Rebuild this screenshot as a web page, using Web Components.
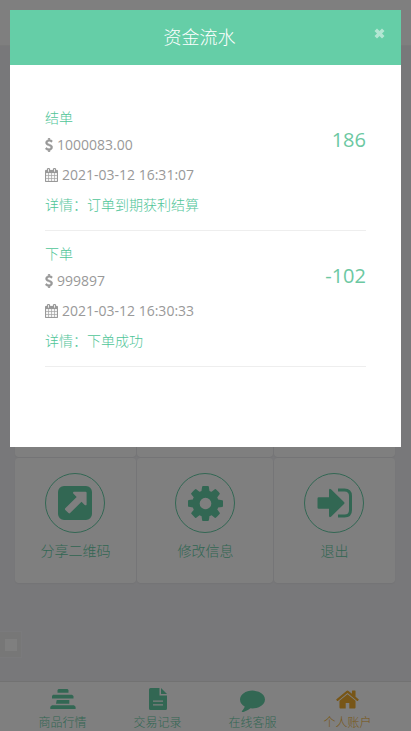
<!DOCTYPE html>
<html lang="zh-CN"><head><meta charset="utf-8"><title>资金流水</title>
<style>
html,body{margin:0;height:100%;overflow:hidden}
body{font:14px/20px "Open Sans","Noto Sans CJK SC",sans-serif;background:#f1f1f5;color:#999}
</style></head><body>
<account-page></account-page>
<script>
const icons={
home:['0 0 1792 1792','<path d="M1472 992v480q0 26-19 45t-45 19h-384v-384h-256v384h-384q-26 0-45-19t-19-45v-480q0-1 .5-3t.5-3l575-474 575 474q1 2 1 6zm223-69l-62 74q-8 9-21 11h-3q-13 0-21-7l-692-577-692 577q-12 8-24 7-13-2-21-11l-62-74q-8-10-7-23.5t11-21.5l719-599q32-26 76-26t76 26l244 204v-195q0-14 9-23t23-9h192q14 0 23 9t9 23v408l219 182q10 8 11 21.5t-7 23.5z"/>'],
cog:['128 128 1536 1536','<path d="M1152 896q0-106-75-181t-181-75-181 75-75 181 75 181 181 75 181-75 75-181zm512-109v222q0 12-8 23t-20 13l-185 28q-19 54-39 91 35 50 107 138 10 12 10 25t-9 23q-27 37-99 108t-94 71q-12 0-26-9l-138-108q-44 23-91 38-16 136-29 186-7 28-36 28h-222q-14 0-24.5-8.5t-11.5-21.5l-28-184q-49-16-90-37l-141 107q-10 9-25 9-14 0-25-11-126-114-165-168-7-10-7-23 0-12 8-23 15-21 51-66.5t54-70.5q-27-50-41-99l-183-27q-13-2-21-12.5t-8-23.5v-222q0-12 8-23t19-13l186-28q14-46 39-92-40-57-107-138-10-12-10-24 0-10 9-23 26-36 98.5-107.5t94.5-71.5q13 0 26 10l138 107q44-23 91-38 16-136 29-186 7-28 36-28h222q14 0 24.5 8.5t11.5 21.5l28 184q49 16 90 37l142-107q9-9 24-9 13 0 25 10 129 119 165 170 7 8 7 22 0 12-8 23-15 21-51 66.5t-54 70.5q26 50 41 98l183 28q13 2 21 12.5t8 23.5z"/>'],
comment:['0 0 1792 1792','<path d="M1792 896q0 174-120 321.5t-326 233-450 85.5q-70 0-145-8-198 175-460 242-49 14-114 22-17 2-30.5-9t-17.5-29v-1q-3-4-.5-12t2-10 4.5-9.5l6-9 7-8.5 8-9q7-8 31-34.5t34.5-38 31-39.5 32.5-51 27-59 26-76q-157-89-247.5-220t-90.5-281q0-130 71-248.5t191-204.5 286-136.5 348-50.5q244 0 450 85.5t326 233 120 321.5z"/>'],
calendar:['64 0 1664 1792','<path stroke="currentColor" stroke-width="24" d="M192 1664h288v-288h-288v288zm352 0h320v-288h-320v288zm-352-352h288v-320h-288v320zm352 0h320v-320h-320v320zm-352-384h288v-288h-288v288zm736 736h320v-288h-320v288zm-384-736h320v-288h-320v288zm768 736h288v-288h-288v288zm-384-352h320v-320h-320v320zm-352-864v-288q0-13-9.5-22.5t-22.5-9.5h-64q-13 0-22.5 9.5t-9.5 22.5v288q0 13 9.5 22.5t22.5 9.5h64q13 0 22.5-9.5t9.5-22.5zm736 864h288v-320h-288v320zm-384-384h320v-288h-320v288zm384 0h288v-288h-288v288zm32-480v-288q0-13-9.5-22.5t-22.5-9.5h-64q-13 0-22.5 9.5t-9.5 22.5v288q0 13 9.5 22.5t22.5 9.5h64q13 0 22.5-9.5t9.5-22.5zm384-64v1280q0 52-38 90t-90 38h-1408q-52 0-90-38t-38-90v-1280q0-52 38-90t90-38h128v-96q0-66 47-113t113-47h64q66 0 113 47t47 113v96h384v-96q0-66 47-113t113-47h64q66 0 113 47t47 113v96h128q52 0 90 38t38 90z"/>'],
dollar:['384 0 1024 1792','<path d="M1362 1185q0 153-99.500 263.500t-258.500 136.500v175q0 14-9 23t-23 9h-135q-13 0-22.500-9.500t-9.500-22.500v-175q-66-9-127.500-31t-101.500-44.500-74-48-46.500-37.500-17.500-18q-17-21-2-41l103-135q7-10 23-12 15-2 24 9l2 2q113 99 243 125 37 8 74 8 81 0 142.500-43t61.500-122q0-28-15-53t-33.500-42-58.500-37.500-66-32-80-32.500q-39-16-61.500-25t-61.500-26.500-62.500-31-56.500-35.500-53.500-42.500-43.500-49-35.500-58-21-66.500-8.500-78q0-138 98-242t255-134v-180q0-13 9.500-22.500t22.500-9.500h135q14 0 23 9t9 23v176q57 6 110.500 23t87 33.500 63.500 37.500 39 29 15 14q17 18 5 38l-81 146q-8 15-23 16-14 3-27-7-3-3-14.500-12t-39-26.500-58.500-32-74.500-26-85.500-11.500q-95 0-155 43t-60 111q0 26 8.500 48t29.500 41.500 39.500 33 56 31 60.500 27 70 27.500q53 20 81 31.500t76 35 75.500 42.500 62 50 53 63.500 31.500 76.500 13 94z" stroke="currentColor" stroke-width="50"/>'],
share:['0 0 34 34','<path fill-rule="evenodd" d="M6 0h22a6 6 0 0 1 6 6v22a6 6 0 0 1-6 6H6a6 6 0 0 1-6-6V6a6 6 0 0 1 6-6zm9.800 5.700q-1.400.8-.3 2l3.200 3.200L7.300 22.300q-.8.8 0 1.600l3.200 3.200q.8.8 1.600 0L23.500 15.700l3.200 3.200q1.400 1 1.900-.5V6.800q0-1.100-1.100-1.100z"/>'],
exit:['0 0 36 30','<path d="M.5 10.500q0-1.200 1.200-1.200H12V2.200q.2-2.200 2-.9L27 14q1 1 0 2L14 28.700q-1.800 1.200-2-.9v-7.100H1.700q-1.200 0-1.200-1.200z"/><path d="M21 2h6.500q6 0 6 6v14q0 6-6 6H21" fill="none" stroke="currentColor" stroke-width="3"/>'],
bars:['0 0 26 20','<path d="M8.500 0h9l1 1v2.800H7.500V1zM3 5.700h19l1.500 1.200v2.500H2V7zM6.700 11h12.600v3.800H6zM2 16.200h22l1.600 1.500V20H.3v-2.300z"/>'],
doc:['0 0 18 22','<path fill-rule="evenodd" d="M1 0h9.500v7.500H18V20.500Q18 22 16.500 22h-15Q0 22 0 20.500V1.500Q0 0 1.500 0zM4 12.500v1.300h10V12.500zm0 3.700v1.300h10V16.200z"/><path d="M12 0l6 6h-6z"/>'],
close:['0 0 11 11','<path d="M3 .6l2.500 2.500L8 .6l2.500 2.400L8 5.500l2.500 2.500L8 10.500 5.500 8 3 10.500.5 8 3 5.500.5 3z"/>']};
const define=(name,css,html)=>customElements.define(name,class extends HTMLElement{
 constructor(){super();this.attachShadow({mode:'open'}).innerHTML='<style>'+css+'</style>'+html}
});
customElements.define('ui-icon',class extends HTMLElement{
 connectedCallback(){const [box,art]=icons[this.getAttribute('name')];
 (this.shadowRoot||this.attachShadow({mode:'open'})).innerHTML=`<style>:host{display:block;flex:none}svg{display:block;width:100%;height:100%;fill:currentColor}</style><svg viewBox="${box}">${art}</svg>`}
});
define('action-card',`:host{display:flex;flex-direction:column;align-items:center;box-sizing:border-box;height:125px;padding-top:15px;background:#fff;border-radius:4px;box-shadow:0 1px 2px #0000000d;color:#65cea7;font-weight:300}
.ring{display:grid;place-items:center;box-sizing:border-box;width:60px;height:60px;border:1px solid;border-radius:50%;margin-bottom:8px}.label{padding-left:1px}`,`<div class="ring"><slot name="icon"></slot></div><div class="label"><slot></slot></div>`);
define('nav-item',`:host{display:flex;flex-direction:column;align-items:center;flex:1;font-size:12px;line-height:18px;font-weight:300;color:#65cea7}
.icon{height:26px;flex:none;display:grid;place-items:center;margin-bottom:2px}`,`<div class="icon"><slot name="icon"></slot></div><slot></slot>`);
define('flow-entry',`:host{display:flex;justify-content:space-between;box-sizing:border-box;height:125px;margin-bottom:11px;border-bottom:1px solid #eee;line-height:30px}
.kind,.detail{color:#4fc598}.amount{color:#6cc8a2}.kind,.detail{font-weight:300}.kind{line-height:24px}.line{display:flex;align-items:center;gap:4px}
.cal{width:13px;height:14px}.usd{width:8px;height:14px}.amount{font-size:20px;padding-top:19px}`,
`<div><div class="kind"><slot name="kind"></slot></div><div class="line"><ui-icon class="usd" name="dollar"></ui-icon><slot name="balance"></slot></div><div class="line"><ui-icon class="cal" name="calendar"></ui-icon><slot name="time"></slot></div><div class="detail"><slot name="detail"></slot></div></div><div class="amount"><slot name="amount"></slot></div>`);
define('flow-dialog',`:host{display:block;box-sizing:border-box;height:437px;background:#fff}
header{display:grid;grid-template-columns:1fr auto 1fr;height:55px;padding-right:12px;box-sizing:border-box;background:#65cea7;color:#fff;font-size:18px;line-height:54px}
h1{grid-column:2;margin:0;font:inherit;font-weight:300}ui-icon{width:11px;height:11px;justify-self:end;margin:18px 4px 0 0;opacity:.5}
main{display:flex;flex-direction:column;padding:41px 35px 0;margin:0}`,`<header><h1><slot name="title"></slot></h1><ui-icon name="close"></ui-icon></header><main><slot></slot></main>`);
define('account-page',`:host{display:flex;flex-direction:column;height:100vh;position:relative}
.top{height:45px;background:#fff;border-bottom:1px solid #f4f4f4;flex:none}
.content{flex:1;padding:286px 16px 0 15px}
.grid{display:grid;grid-template-columns:121px 136px 121px;gap:1px}
.grid action-card:nth-child(3n+1){padding-right:1px}.grid action-card:nth-child(3n){padding-right:1px}
.float{display:grid;place-items:center;box-sizing:border-box;width:22px;height:27px;margin-top:48px;margin-left:-15px;border:1px solid #f5f5f8;border-width:1px 1px 1px 0;background:#eeeeef}.float i{width:12px;height:12px;background:#fff}
nav{display:flex;box-sizing:border-box;height:50px;padding:4px 16px 0 15px;background:#fff;border-top:1px solid #e4e4e4;flex:none}
.overlay{position:absolute;inset:0;padding:10px;background:#00000080}
.home{color:#f0ad2e}`,
`<div class="top"></div><section class="content"><div class="grid"><action-card></action-card><action-card></action-card><action-card></action-card>
<action-card><ui-icon slot="icon" name="share" style="width:34px;height:34px"></ui-icon>分享二维码</action-card><action-card><ui-icon slot="icon" name="cog" style="width:35px;height:35px"></ui-icon>修改信息</action-card><action-card><ui-icon slot="icon" name="exit" style="width:36px;height:30px;margin-left:1px"></ui-icon>退出</action-card></div><div class="float"><i></i></div></section>
<nav><nav-item><ui-icon slot="icon" name="bars" style="width:26px;height:20px"></ui-icon>商品行情</nav-item><nav-item><ui-icon slot="icon" name="doc" style="width:18px;height:22px"></ui-icon>交易记录</nav-item><nav-item><ui-icon slot="icon" name="comment" style="width:25px;height:25px"></ui-icon>在线客服</nav-item><nav-item class="home"><ui-icon slot="icon" name="home" style="width:25px;height:25px"></ui-icon>个人账户</nav-item></nav>
<div class="overlay"><flow-dialog><span slot="title">资金流水</span>
<flow-entry><span slot="kind">结单</span><span slot="balance">1000083.00</span><span slot="time">2021-03-12 16:31:07</span><span slot="detail">详情：订单到期获利结算</span><span slot="amount">186</span></flow-entry>
<flow-entry><span slot="kind">下单</span><span slot="balance">999897</span><span slot="time">2021-03-12 16:30:33</span><span slot="detail">详情：下单成功</span><span slot="amount">-102</span></flow-entry></flow-dialog></div>`);
</script></body></html>
